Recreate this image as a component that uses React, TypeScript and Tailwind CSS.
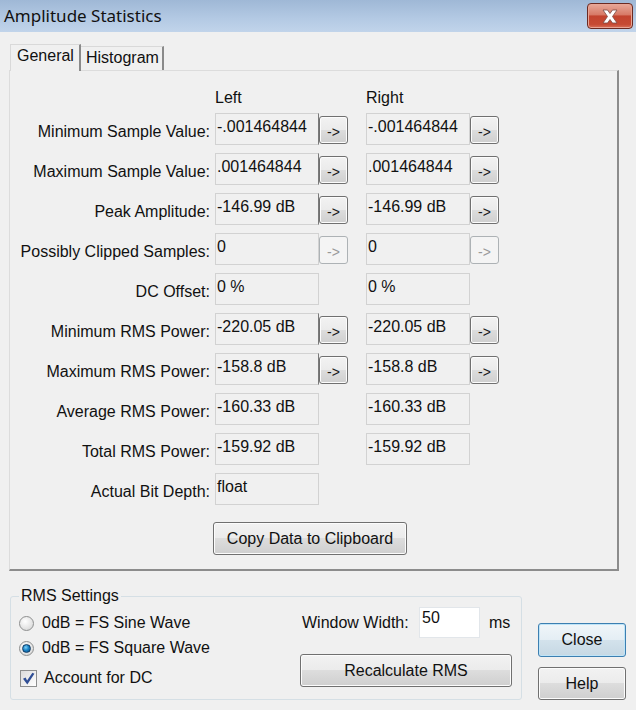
import React from 'react';

type Row = {
  label: string;
  left: string;
  right?: string;
  btn?: 'on' | 'off';
};

const rows: Row[] = [
  { label: 'Minimum Sample Value:', left: '-.001464844', right: '-.001464844', btn: 'on' },
  { label: 'Maximum Sample Value:', left: '.001464844', right: '.001464844', btn: 'on' },
  { label: 'Peak Amplitude:', left: '-146.99 dB', right: '-146.99 dB', btn: 'on' },
  { label: 'Possibly Clipped Samples:', left: '0', right: '0', btn: 'off' },
  { label: 'DC Offset:', left: '0 %', right: '0 %' },
  { label: 'Minimum RMS Power:', left: '-220.05 dB', right: '-220.05 dB', btn: 'on' },
  { label: 'Maximum RMS Power:', left: '-158.8 dB', right: '-158.8 dB', btn: 'on' },
  { label: 'Average RMS Power:', left: '-160.33 dB', right: '-160.33 dB' },
  { label: 'Total RMS Power:', left: '-159.92 dB', right: '-159.92 dB' },
  { label: 'Actual Bit Depth:', left: 'float' },
];

const btnBg =
  'bg-[linear-gradient(#f2f2f2,#ebebeb_50%,#dddddd_50%,#cfcfcf)] shadow-[inset_0_0_0_1px_#fcfcfc]';

const ArrowButton: React.FC<{ state?: 'on' | 'off' }> = ({ state }) => {
  if (!state) return <div className="w-[29px] shrink-0" />;
  if (state === 'off') {
    return (
      <div className="w-[29px] h-[28px] mt-[3px] shrink-0 rounded-[3px] border border-[#adb2b5] bg-[#f4f4f4] flex items-center justify-center pt-[3px] text-[14px] text-[#9a9a9a] leading-none">
        -&gt;
      </div>
    );
  }
  return (
    <div
      className={`w-[29px] h-[28px] mt-[3px] shrink-0 rounded-[3px] border border-[#707070] ${btnBg} flex items-center justify-center pt-[3px] text-[14px] text-[#1a1a1a] leading-none`}
    >
      -&gt;
    </div>
  );
};

const Field: React.FC<{ value: string; dark?: boolean }> = ({ value, dark }) => (
  <div
    className={`w-[104px] h-[32px] shrink-0 border border-[#d2d2d2] bg-[#f0f0f0] pl-[1px] pt-[4px] leading-[18px] whitespace-nowrap ${
      dark ? 'border-r-[#7a7a7a]' : ''
    }`}
  >
    {value}
  </div>
);

const Button: React.FC<{ children: React.ReactNode; className?: string }> = ({ children, className }) => (
  <div
    className={`rounded-[3px] border border-[#707070] ${btnBg} flex items-center justify-center leading-[18px] ${className ?? ''}`}
  >
    {children}
  </div>
);

const Radio: React.FC<{ checked?: boolean }> = ({ checked }) => (
  <div className="w-[15px] h-[15px] rounded-full border border-[#8e8f8f] bg-[radial-gradient(circle_at_40%_35%,#ffffff,#e6e6e6_55%,#cfcfcf)] flex items-center justify-center shrink-0">
    {checked && (
      <div className="w-[9px] h-[9px] rounded-full border border-[#0f3c66] bg-[radial-gradient(circle_at_40%_35%,#7fd1f7,#1b84c7_45%,#0a4c85)]" />
    )}
  </div>
);

const Checkbox: React.FC = () => (
  <div className="w-[17px] h-[17px] border border-[#8e8f8f] bg-[linear-gradient(135deg,#dcdcdc,#ffffff)] flex items-center justify-center shrink-0">
    <svg width="13" height="13" viewBox="0 0 13 13">
      <path d="M1 6.8 L3.6 5.6 L5.1 8.4 L10.4 0.8 L12.4 1.8 L5.3 12.4 Z" fill="#2f4e95" />
    </svg>
  </div>
);

export default function App() {
  return (
    <div className="w-[636px] h-[710px] bg-[#f0f0f0] text-[16px] text-[#111] font-['Liberation_Sans',Arial,sans-serif] overflow-hidden">
      {/* title bar */}
      <div className="h-[32px] flex items-start justify-between bg-[linear-gradient(#9fb8d6,#b4cae4_60%,#c1d4ea)]">
        <div className="pl-[4px] pt-[5px] text-[17px] leading-[22px] font-['Noto_Sans',sans-serif] text-[#111]">
          Amplitude Statistics
        </div>
        <div className="mt-[3px] mr-[3px] w-[46px] h-[26px] rounded-[4px] border border-[#6b2a22] bg-[linear-gradient(#e8a999,#d77966_45%,#c2432e_50%,#c64a33_85%,#d8705a)] shadow-[inset_0_0_0_1px_#e9a595] flex items-center justify-center">
          <svg width="20" height="17" viewBox="0 0 20 17">
            <path
              d="M3 2 H7.5 L10 5.5 L12.5 2 H17 L12.5 8.5 L17 15 H12.5 L10 11.5 L7.5 15 H3 L7.5 8.5 Z"
              fill="#ffffff"
              stroke="#7a4a44"
              strokeWidth="0.8"
              strokeLinejoin="round"
            />
          </svg>
        </div>
      </div>

      {/* tabs */}
      <div className="mt-[12px] pl-[10px] flex items-end h-[26px]">
        <div className="relative z-10 -mb-[1px] h-[27px] w-[71px] bg-[#f0f0f0] border-t border-l border-[#d9d9d9] border-r-2 border-r-[#8a8a8a] pl-[6px] pt-[2px] leading-[18px]">
          General
        </div>
        <div className="h-[24px] w-[83px] border-t border-[#d9d9d9] border-r-2 border-r-[#8a8a8a] pl-[5px] pt-[2px] leading-[18px]">
          Histogram
        </div>
      </div>

      {/* tab panel */}
      <div className="ml-[9px] w-[610px] h-[501px] border-t border-l border-[#dcdcdc] border-r-2 border-r-[#8c8c8c] border-b-2 border-b-[#8c8c8c] pt-[18px]">
        <div className="flex h-[18px] mb-[6px] leading-[18px]">
          <div className="w-[205px]" />
          <div className="w-[151px]">Left</div>
          <div>Right</div>
        </div>

        {rows.map((r) => (
          <div key={r.label} className="flex items-start h-[32px] mb-[8px]">
            <div className="w-[205px] pr-[5px] text-right pt-[10px] leading-[18px] whitespace-nowrap">{r.label}</div>
            <Field value={r.left} dark={r.btn === 'on'} />
            <ArrowButton state={r.btn} />
            <div className="w-[18px] shrink-0" />
            {r.right !== undefined && (
              <>
                <Field value={r.right} />
                <ArrowButton state={r.btn} />
              </>
            )}
          </div>
        ))}

        <div className="flex pt-[9px] pl-[203px]">
          <Button className="w-[194px] h-[33px]">Copy Data to Clipboard</Button>
        </div>
      </div>

      {/* bottom */}
      <div className="flex mt-[25px]">
        <div className="relative ml-[10px] w-[512px] h-[104px] rounded-[3px] border border-[#d5dfe5] flex">
          <div className="absolute -top-[10px] left-[8px] px-[2px] bg-[#f0f0f0] leading-[18px]">RMS Settings</div>

          <div className="pl-[8px] pt-[14px] flex flex-col">
            <div className="flex items-center h-[24px] gap-[8px]">
              <Radio />
              <span className="leading-[18px]">0dB = FS Sine Wave</span>
            </div>
            <div className="flex items-center h-[24px] mt-[1px] gap-[8px]">
              <Radio checked />
              <span className="leading-[18px]">0dB = FS Square Wave</span>
            </div>
            <div className="flex items-center h-[24px] mt-[6px] gap-[7px] pl-[1px]">
              <Checkbox />
              <span className="leading-[18px]">Account for DC</span>
            </div>
          </div>

          <div className="ml-auto mr-[9px] pt-[10px] w-[212px] flex flex-col">
            <div className="flex items-center h-[31px]">
              <div className="w-[119px] pl-[2px] leading-[18px]">Window Width:</div>
              <div className="w-[61px] h-[31px] bg-white border border-[#e2e6ea] pl-[2px] pt-[1px] leading-[18px]">50</div>
              <div className="ml-[9px] leading-[18px]">ms</div>
            </div>
            <Button className="mt-[16px] w-[212px] h-[33px]">Recalculate RMS</Button>
          </div>
        </div>

        <div className="ml-[16px] pt-[27px] flex flex-col gap-[10px]">
          <div className="w-[88px] h-[34px] rounded-[3px] border border-[#3c7fb1] bg-[linear-gradient(#f0f6f9,#e4eef4_50%,#d3e2ec_50%,#c6d8e4)] shadow-[inset_0_0_0_1px_#bfe4f7] flex items-center justify-center leading-[18px]">
            Close
          </div>
          <Button className="w-[88px] h-[33px]">Help</Button>
        </div>
      </div>
    </div>
  );
}
